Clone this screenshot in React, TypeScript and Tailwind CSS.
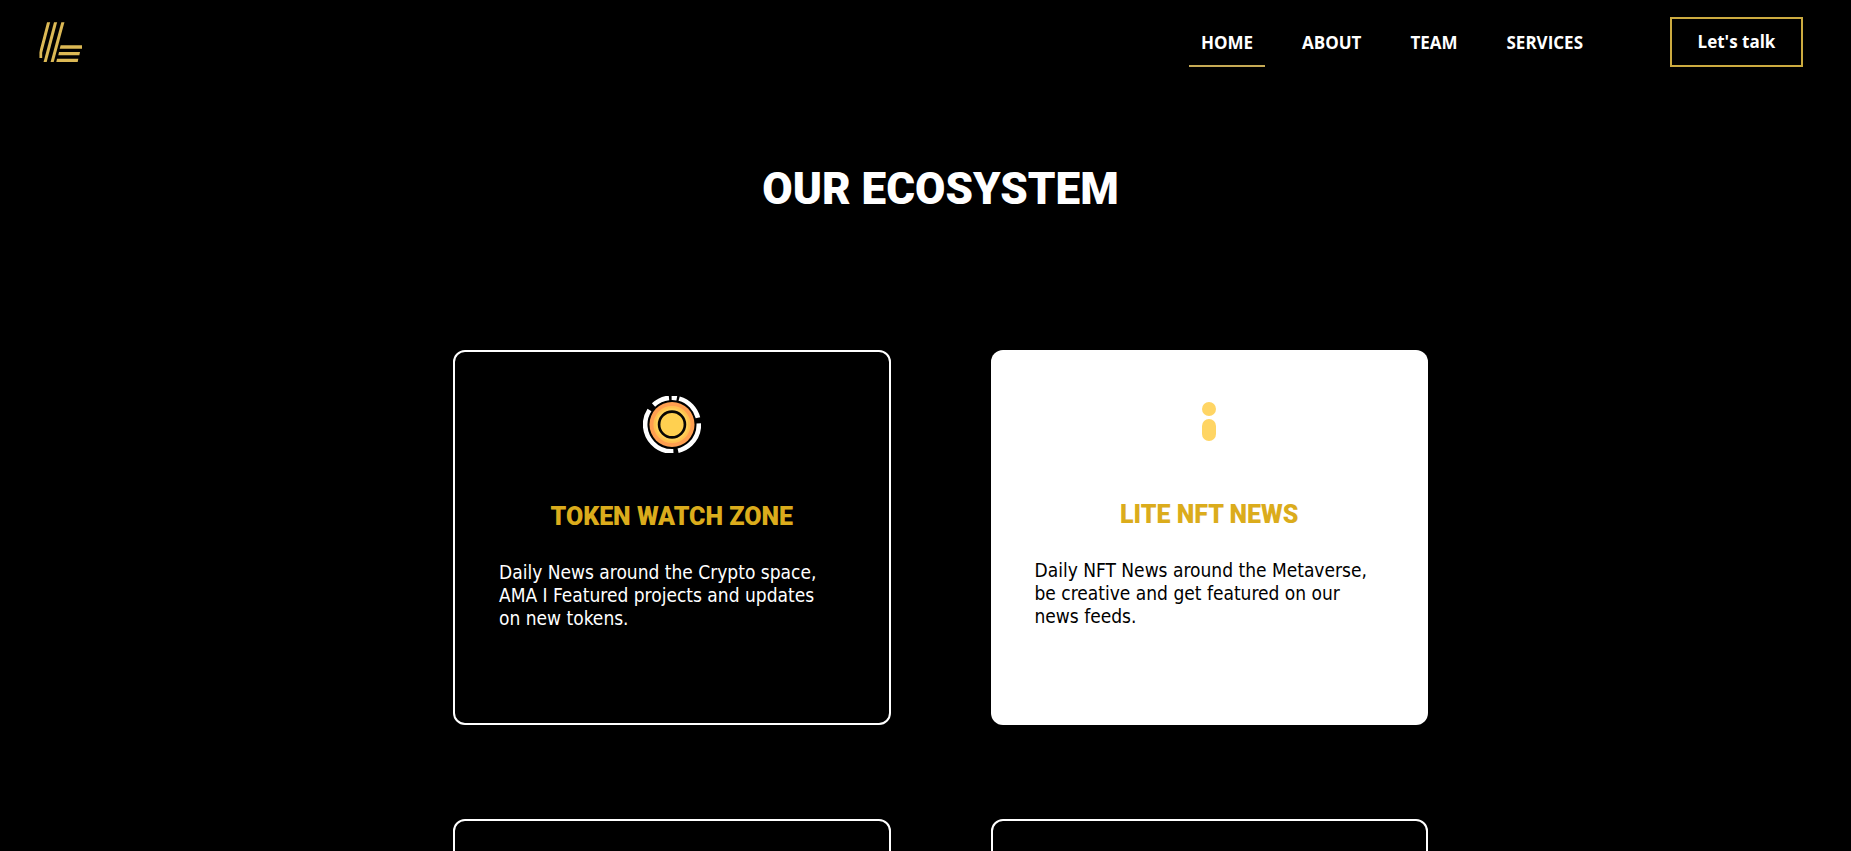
import type { ReactNode } from "react";

function Logo() {
  return (
    <svg viewBox="57 60 132 132" className="size-11" aria-hidden="true">
      <defs>
        <clipPath id="logo-clip">
          <rect x="58" y="67" width="130" height="119" />
        </clipPath>
      </defs>
      <g clipPath="url(#logo-clip)" stroke="#dcb955" strokeWidth="9" fill="none">
        <path d="M88 58 62 158v16" />
        <path d="M109 58 73 195" />
        <path d="M131 58 94 195" />
      </g>
      <g fill="#dcb955">
        <path d="M122 136h64v10h-67z" />
        <path d="M117 156h63l-2 10h-63z" />
        <path d="M111 176h64l-2 10h-64z" />
      </g>
    </svg>
  );
}

function CoinIcon() {
  return (
    <svg viewBox="69 47 174 172" className="h-[57px] w-[58px]" aria-hidden="true">
      <circle
        cx="156"
        cy="133"
        r="81"
        fill="none"
        stroke="#fff"
        strokeWidth="14"
        pathLength="360"
        strokeDasharray="37 5.5 11 5 60 12 79 10 125 15.5"
        transform="rotate(-133.5 156 133)"
      />
      <circle cx="156" cy="133" r="68" fill="#ff9f50" />
      <circle cx="156" cy="133" r="56" fill="#ffc14f" />
      <circle cx="156" cy="133" r="49" fill="#ffd15a" />
      <circle cx="156" cy="133" r="39" fill="#ffd050" stroke="#080604" strokeWidth="8" />
    </svg>
  );
}

function InfoIcon() {
  return (
    <svg viewBox="0 0 58 57" className="h-[57px] w-[58px]" aria-hidden="true">
      <circle cx="29" cy="15" r="7" fill="#ffd564" />
      <rect x="22" y="25" width="14" height="22" rx="7" fill="#ffd564" />
    </svg>
  );
}

const links = ["HOME", "ABOUT", "TEAM", "SERVICES"];

function Card({ icon, title, text, light = false }: { icon?: ReactNode; title?: string; text?: string; light?: boolean }) {
  return (
    <article
      className={`flex min-h-[375px] flex-col rounded-xl p-11 ${light ? "bg-white text-black" : "border-2 border-white text-white"}`}
    >
      {icon && <div className="flex justify-center">{icon}</div>}
      {title && (
        <h2 className="mt-12 text-center font-[Roboto,sans-serif] text-[25px] leading-8 font-black text-[#dbac1c]">{title}</h2>
      )}
      {text && <p className="mt-7 pr-2 text-[19px] leading-[23px]">{text}</p>}
    </article>
  );
}

export default function App() {
  return (
    <div className="h-screen overflow-hidden bg-black font-['DejaVu_Sans_Condensed','DejaVu_Sans',sans-serif] text-white">
      <header className="flex items-start justify-between pt-[17px] pr-12 pl-[39px] font-['Open_Sans',sans-serif] text-[17px] font-bold">
        <a href="#home" aria-label="Home" className="mt-[3px]">
          <Logo />
        </a>
        <div className="flex items-center gap-[75px]">
          <nav className="flex gap-[25px]">
            {links.map((label, i) => (
              <a
                key={label}
                href={`#${label.toLowerCase()}`}
                className={`flex h-[50px] items-center border-b-2 px-3 pt-1 ${i === 0 ? "border-[#c6aa55]" : "border-transparent"}`}
              >
                {label}
              </a>
            ))}
          </nav>
          <button type="button" className="h-[50px] w-[133px] border-2 border-[#ccab40]">
            Let's talk
          </button>
        </div>
      </header>
      <main className="pl-[30px]">
        <h1 className="mt-24 text-center font-[Roboto,sans-serif] text-[44px] leading-[52px] font-black">OUR ECOSYSTEM</h1>
        <section className="mx-auto mt-[135px] grid max-w-[975px] grid-cols-2 gap-x-[100px] gap-y-[94px]">
          <Card
            icon={<CoinIcon />}
            title="TOKEN WATCH ZONE"
            text="Daily News around the Crypto space, AMA I Featured projects and updates on new tokens."
          />
          <Card
            light
            icon={<InfoIcon />}
            title="LITE NFT NEWS"
            text="Daily NFT News around the Metaverse, be creative and get featured on our news feeds."
          />
          <Card />
          <Card />
        </section>
      </main>
    </div>
  );
}
